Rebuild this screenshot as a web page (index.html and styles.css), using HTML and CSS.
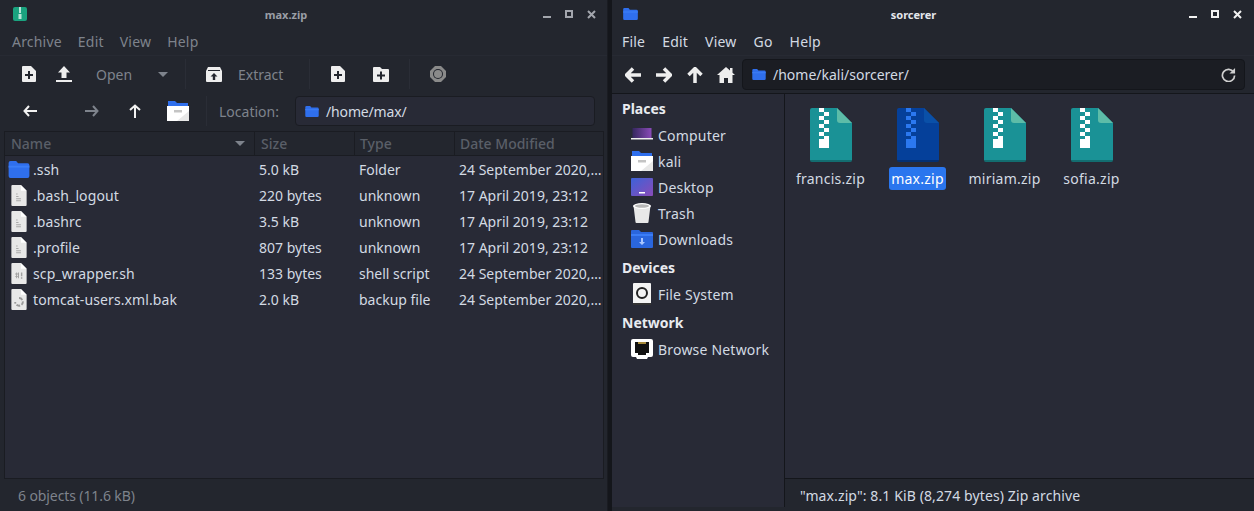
FILE: index.html
```html
<!DOCTYPE html>
<html lang="en">
<head>
  <meta charset="UTF-8" />
  <title>max.zip and sorcerer</title>
  <link rel="stylesheet" href="styles.css">
</head>
<body>
  <svg class="defs" width="0" height="0">
    <symbol id="folder" viewBox="0 0 22 18"><path d="M0 2a2 2 0 0 1 2-2h6l2 2.500h10a2 2 0 0 1 2 2V16a2 2 0 0 1-2 2H2a2 2 0 0 1-2-2z" fill="#2f6fed"/><path d="M0 5h22v2H0z" fill="#3b7df5"/></symbol>
    <symbol id="homefolder" viewBox="0 0 22 20"><path d="M1 0h7l2 2h11v5H1z" fill="#2f6fed"/><path d="M0 5h22v15H0z" fill="#fff"/><path d="M7 9h8v2.500H7z" fill="#c4c4c4"/><path d="M10 20l12-10v10z" fill="#e8e8e8"/></symbol>
    <symbol id="textfile" viewBox="0 0 16 22"><path d="M1 0h9l6 6v15a1 1 0 0 1-1 1H1a1 1 0 0 1-1-1V1a1 1 0 0 1 1-1z" fill="#e8e8e8"/><path d="M10 0l6 6h-6z" fill="#fff"/><path d="M5 9h1.500v1H5zM5 11.500h2.500v1H5zM5 14h5v1H5zM5 16h5v1H5z" fill="#a8a8a8"/></symbol>
    <symbol id="scriptfile" viewBox="0 0 16 22"><path d="M1 0h9l6 6v15a1 1 0 0 1-1 1H1a1 1 0 0 1-1-1V1a1 1 0 0 1 1-1z" fill="#e8e8e8"/><path d="M10 0l6 6h-6z" fill="#fff"/><path d="M4 11h4v1H4zM4 13.500h4v1H4zM5 10h1v6H5zM7 10h1v6H7zM10 10h1.500v4H10zM10 15h1.500v1.500H10z" fill="#a0a0a0"/></symbol>
    <symbol id="backupfile" viewBox="0 0 16 22"><path d="M1 0h9l6 6v15a1 1 0 0 1-1 1H1a1 1 0 0 1-1-1V1a1 1 0 0 1 1-1z" fill="#e8e8e8"/><path d="M10 0l6 6h-6z" fill="#fff"/><path d="M8 9.500a4 4 0 1 1-4 4" fill="none" stroke="#9a9a9a" stroke-width="2" stroke-dasharray="4 1.500"/></symbol>
    <symbol id="zip" viewBox="0 0 42 54"><path d="M2 0h25l15 15v37a2 2 0 0 1-2 2H2a2 2 0 0 1-2-2V2a2 2 0 0 1 2-2z" fill="currentColor"/><path d="M27 0l15 15H30a3 3 0 0 1-3-3z" fill="var(--fold)"/><path d="M9 0h5v4H9zM14 4h5v4h-5zM9 8h5v4H9zM14 12h5v4h-5zM9 16h5v4H9zM14 20h5v4h-5zM9 24h5v4H9zM14 28h5v3h-5zM9 31h10v9H9z" fill="var(--teeth)"/><path d="M0 52h42a2 2 0 0 1-2 2H2a2 2 0 0 1-2-2z" fill="#000" opacity=".25"/></symbol>
    <symbol id="newfile" viewBox="0 0 14 16"><path d="M1 0h8l5 5v10a1 1 0 0 1-1 1H1a1 1 0 0 1-1-1V1a1 1 0 0 1 1-1z" fill="#eee"/><path d="M6 5h2v3h3v2H8v3H6v-3H3V8h3z" fill="#23262e"/></symbol>
    <symbol id="newfolder" viewBox="0 0 16 15"><path d="M1 0h6l2 2h6a1 1 0 0 1 1 1v11a1 1 0 0 1-1 1H1a1 1 0 0 1-1-1V1a1 1 0 0 1 1-1z" fill="#eee"/><path d="M7 4.500h2v3h3v2H9v3H7v-3H4v-2h3z" fill="#23262e"/></symbol>
  </svg>

  <div class="window window-left">
    <div class="titlebar">
      <svg class="app-icon" viewBox="0 0 14 14"><rect width="14" height="14" rx="2" fill="#1aa37f"/><path d="M6 0h2v6H6zM5.500 7h3v5h-3z" fill="#b9e6da"/></svg>
      <div class="title title-dim">max.zip</div>
      <div class="winbtns">
        <i class="btn-min"></i><i class="btn-max"></i>
        <svg class="btn-close" viewBox="0 0 9 9"><path d="M1 1l7 7M8 1L1 8" stroke="currentColor" stroke-width="2"/></svg>
      </div>
    </div>
    <div class="menubar dim"><span>Archive</span><span>Edit</span><span>View</span><span>Help</span></div>

    <div class="toolbar">
      <div class="tool-group group-open">
        <svg class="tool-newfile"><use href="#newfile"/></svg>
        <svg class="tool-upload" viewBox="0 0 16 16"><path d="M8 0l6 6.500h-3.500V12h-5V6.500H2z M0 14h16v2H0z" fill="#eee"/></svg>
        <span class="tool-label">Open</span>
        <i class="caret"></i>
      </div>
      <div class="tool-group group-extract">
        <svg class="tool-extract" viewBox="0 0 16 15"><path d="M2 0h12l2 4v10a1 1 0 0 1-1 1H1a1 1 0 0 1-1-1V4z" fill="#eee"/><path d="M2 3h12v1H2z" fill="#23262e"/><path d="M8 6l3.500 3.500H9.200V13H6.800V9.500H4.500z" fill="#23262e"/></svg>
        <span class="tool-label">Extract</span>
      </div>
      <div class="tool-group group-add">
        <svg class="tool-newfile"><use href="#newfile"/></svg>
        <svg class="tool-newfolder"><use href="#newfolder"/></svg>
      </div>
      <div class="tool-group group-stop">
        <svg class="tool-stop" viewBox="0 0 16 16"><path d="M5 0h6l5 5v6l-5 5H5l-5-5V5z" fill="#8a8a8a"/><circle cx="8" cy="8" r="5" fill="#23262e"/><circle cx="8" cy="8" r="4" fill="#8a8a8a"/></svg>
      </div>
    </div>

    <div class="locationbar">
      <div class="nav-group">
        <svg class="nav-arrow arrow-back" viewBox="0 0 14 12"><path d="M6 1L1.500 6 6 11M2 6h12" fill="none" stroke="currentColor" stroke-width="2"/></svg>
        <svg class="nav-arrow arrow-fwd dim-icon" viewBox="0 0 14 12"><path d="M8 1l4.500 5L8 11M12 6H0" fill="none" stroke="currentColor" stroke-width="2"/></svg>
        <svg class="nav-arrow arrow-up" viewBox="0 0 12 14"><path d="M1 6l5-4.500L11 6M6 2v12" fill="none" stroke="currentColor" stroke-width="2"/></svg>
        <svg class="nav-home"><use href="#homefolder"/></svg>
      </div>
      <span class="location-label">Location:</span>
      <div class="location-entry">
        <svg class="path-folder"><use href="#folder"/></svg>
        <span>/home/max/</span>
      </div>
    </div>

    <div class="listview">
      <div class="list-header">
        <div class="col col-name">Name<i class="caret"></i></div>
        <div class="col col-size">Size</div>
        <div class="col col-type">Type</div>
        <div class="col col-date">Date Modified</div>
      </div>
      <div class="row">
        <div class="col col-name"><svg class="row-folder"><use href="#folder"/></svg>.ssh</div>
        <div class="col col-size">5.0 kB</div><div class="col col-type">Folder</div><div class="col col-date">24 September 2020,…</div>
      </div>
      <div class="row">
        <div class="col col-name"><svg class="row-file"><use href="#textfile"/></svg>.bash_logout</div>
        <div class="col col-size">220 bytes</div><div class="col col-type">unknown</div><div class="col col-date">17 April 2019, 23:12</div>
      </div>
      <div class="row">
        <div class="col col-name"><svg class="row-file"><use href="#textfile"/></svg>.bashrc</div>
        <div class="col col-size">3.5 kB</div><div class="col col-type">unknown</div><div class="col col-date">17 April 2019, 23:12</div>
      </div>
      <div class="row">
        <div class="col col-name"><svg class="row-file"><use href="#textfile"/></svg>.profile</div>
        <div class="col col-size">807 bytes</div><div class="col col-type">unknown</div><div class="col col-date">17 April 2019, 23:12</div>
      </div>
      <div class="row">
        <div class="col col-name"><svg class="row-file"><use href="#scriptfile"/></svg>scp_wrapper.sh</div>
        <div class="col col-size">133 bytes</div><div class="col col-type">shell script</div><div class="col col-date">24 September 2020,…</div>
      </div>
      <div class="row">
        <div class="col col-name"><svg class="row-file"><use href="#backupfile"/></svg>tomcat-users.xml.bak</div>
        <div class="col col-size">2.0 kB</div><div class="col col-type">backup file</div><div class="col col-date">24 September 2020,…</div>
      </div>
    </div>
    <div class="statusbar dim">6 objects (11.6 kB)</div>
  </div>

  <div class="window window-right">
    <div class="titlebar">
      <svg class="app-icon folder-icon"><use href="#folder"/></svg>
      <div class="title">sorcerer</div>
      <div class="winbtns bright">
        <i class="btn-min"></i><i class="btn-max"></i>
        <svg class="btn-close" viewBox="0 0 9 9"><path d="M1 1l7 7M8 1L1 8" stroke="currentColor" stroke-width="2"/></svg>
      </div>
    </div>
    <div class="menubar"><span>File</span><span>Edit</span><span>View</span><span>Go</span><span>Help</span></div>

    <div class="pathbar">
      <div class="path-nav">
        <svg class="big-arrow" viewBox="0 0 16 16"><path d="M8 1.500L1.500 8 8 14.500M2.500 8H16" fill="none" stroke="currentColor" stroke-width="3.500"/></svg>
        <svg class="big-arrow" viewBox="0 0 16 16"><path d="M8 1.500L14.500 8 8 14.500M13.500 8H0" fill="none" stroke="currentColor" stroke-width="3.500"/></svg>
        <svg class="big-arrow" viewBox="0 0 16 16"><path d="M1.500 8L8 1.500 14.500 8M8 2.500V16" fill="none" stroke="currentColor" stroke-width="3.500"/></svg>
        <svg class="big-home" viewBox="0 0 18 16"><path d="M9 0l4 3.500V1h2.500v4.700L18 8h-2.500v8H11v-5H7v5H2.500V8H0z" fill="currentColor"/></svg>
      </div>
      <div class="path-entry">
        <svg class="path-folder"><use href="#folder"/></svg>
        <span>/home/kali/sorcerer/</span>
        <svg class="reload" viewBox="0 0 16 16"><path d="M13.500 5.500A6.500 6.500 0 1 0 14.500 9" fill="none" stroke="currentColor" stroke-width="1.800"/><path d="M15 1v6H9z" fill="currentColor"/></svg>
      </div>
    </div>

    <div class="panes">
      <div class="sidebar">
        <h3 class="side-first">Places</h3>
        <div class="side-item">
          <svg class="side-icon" viewBox="0 0 22 20"><defs><linearGradient id="grad" x1="0" y1="0" x2="1" y2="1"><stop offset="0" stop-color="#3c62d8"/><stop offset="1" stop-color="#8a4bb8"/></linearGradient><linearGradient id="screen" x1="0" y1="0" x2="1" y2="0"><stop offset="0" stop-color="#35275e"/><stop offset="1" stop-color="#8a4bb8"/></linearGradient></defs><path d="M1.500 3h19v10h-19z" fill="url(#screen)"/><path d="M0 13h22v1.500H0z" fill="#eee"/></svg>Computer
        </div>
        <div class="side-item"><svg class="side-icon"><use href="#homefolder"/></svg>kali</div>
        <div class="side-item">
          <svg class="side-icon" viewBox="0 0 22 18"><rect width="22" height="18" rx="1" fill="url(#grad)"/><path d="M8 14h6v1.500H8z" fill="#fff"/></svg>Desktop
        </div>
        <div class="side-item">
          <svg class="side-icon" viewBox="0 0 22 20"><path d="M2.500 2.500h17l-2 16.500a1 1 0 0 1-1 1H5.500a1 1 0 0 1-1-1z" fill="#e8e8e8"/><ellipse cx="11" cy="3" rx="9" ry="3" fill="#fff"/><ellipse cx="11" cy="3" rx="7" ry="1.800" fill="#b8b8b8"/></svg>Trash
        </div>
        <div class="side-item">
          <svg class="side-icon" viewBox="0 0 22 18"><path d="M1 0h7l2 2h11a1 1 0 0 1 1 1v14a1 1 0 0 1-1 1H1a1 1 0 0 1-1-1V1a1 1 0 0 1 1-1z" fill="#2a66dd"/><path d="M0 4h22v2H0z" fill="#3b7df5"/><path d="M10 8h2v4h2l-3 3-3-3h2z" fill="#a9c6ff"/></svg>Downloads
        </div>
        <h3 class="side-gap">Devices</h3>
        <div class="side-item">
          <svg class="side-icon icon-tall" viewBox="0 0 22 22"><path d="M3 0h16a1 1 0 0 1 1 1v19H2V1a1 1 0 0 1 1-1z" fill="#f4f4f4"/><path d="M2 20h18v2H2z" fill="#333"/><circle cx="11" cy="10" r="5" fill="none" stroke="#222" stroke-width="2"/></svg>File System
        </div>
        <h3 class="side-gap">Network</h3>
        <div class="side-item">
          <svg class="side-icon" viewBox="0 0 22 20"><path d="M2 0h18a2 2 0 0 1 2 2v14a2 2 0 0 1-2 2h-3l-1 2H6l-1-2H2a2 2 0 0 1-2-2V2a2 2 0 0 1 2-2z" fill="#fff"/><path d="M4 3h14v11h-3v2H7v-2H4z" fill="#111"/><path d="M7 3h8v2H7z" fill="#a88a3a"/></svg>Browse Network
        </div>
      </div>

      <div class="file-pane">
        <div class="icon-grid">
          <div class="file-item">
            <svg class="zip-icon zip-teal"><use href="#zip"/></svg>
            <span class="file-name">francis.zip</span>
          </div>
          <div class="file-item">
            <svg class="zip-icon zip-selected"><use href="#zip"/></svg>
            <span class="file-name selected">max.zip</span>
          </div>
          <div class="file-item">
            <svg class="zip-icon zip-teal"><use href="#zip"/></svg>
            <span class="file-name">miriam.zip</span>
          </div>
          <div class="file-item">
            <svg class="zip-icon zip-teal"><use href="#zip"/></svg>
            <span class="file-name">sofia.zip</span>
          </div>
        </div>
        <div class="file-status">"max.zip": 8.1 KiB (8,274 bytes) Zip archive</div>
      </div>
    </div>
  </div>
</body>
</html>
```

FILE: styles.css
```css
* {
  box-sizing: border-box;
}

html, body {
  margin: 0;
  height: 100%;
}

body {
  width: 1254px;
  height: 511px;
  overflow: hidden;
  display: flex;
  gap: 4px;
  background: #14161b;
  font-family: "Noto Sans", sans-serif;
  font-size: 14px;
  color: #d3dae3;
}

.defs {
  position: absolute;
}

svg {
  display: block;
  flex: none;
}

.window {
  height: 511px;
  display: flex;
  flex-direction: column;
  background: #23262e;
}

.window-left {
  width: 608px;
  border-right: 1px solid #1a1c22;
}

.window-right {
  width: 642px;
  flex: 1;
}

/* title bar */
.titlebar {
  height: 28px;
  flex: none;
  display: flex;
  align-items: center;
  padding: 0 0 0 13px;
  position: relative;
}

.window-right .titlebar {
  padding-left: 11px;
}

.app-icon {
  width: 14px;
  height: 14px;
}

.folder-icon {
  width: 15px;
  height: 12px;
}

.title {
  flex: 1;
  text-align: center;
  font-size: 11px;
  font-weight: 700;
  color: #e4e7ec;
}

.title-dim {
  color: #9a9ea6;
  padding-left: 2px;
}

.winbtns {
  display: flex;
  align-items: center;
  gap: 14px;
  padding-right: 11px;
  color: #a3a6ad;
}

.winbtns.bright {
  padding-right: 12px;
  color: #f2f2f2;
}

.btn-min {
  width: 8px;
  height: 2px;
  margin-top: 6px;
  background: currentColor;
}

.btn-max {
  width: 8px;
  height: 8px;
  border: 2px solid currentColor;
}

.btn-close {
  width: 9px;
  height: 9px;
}

/* menus */
.menubar {
  height: 28px;
  flex: none;
  display: flex;
  align-items: center;
  gap: 17px;
  padding-left: 12px;
  border-bottom: 1px solid #272a33;
  color: #d3dae3;
  letter-spacing: 0.2px;
}

.window-right .menubar {
  padding-left: 10px;
}

.menubar.dim {
  gap: 16px;
  color: #7e838c;
}

/* left toolbar */
.toolbar {
  height: 36px;
  flex: none;
  display: flex;
  align-items: center;
  color: #7e838c;
}

.tool-group {
  display: flex;
  align-items: center;
  height: 30px;
  border-right: 1px solid #2a2d36;
}

.group-open {
  width: 186px;
  padding-left: 22px;
}

.group-extract {
  width: 124px;
  padding-left: 20px;
}

.group-add {
  width: 100px;
  padding-left: 21px;
  gap: 28px;
}

.group-stop {
  padding-left: 20px;
  border-right: 0;
}

.tool-newfile {
  width: 14px;
  height: 16px;
}

.tool-newfolder {
  width: 16px;
  height: 15px;
}

.tool-upload {
  width: 16px;
  height: 16px;
  margin-left: 20px;
}

.tool-extract {
  width: 16px;
  height: 15px;
}

.tool-stop {
  width: 16px;
  height: 16px;
}

.tool-label {
  margin-left: 16px;
}

.group-open .tool-label {
  margin-left: 24px;
}

.group-open .caret {
  margin-left: 26px;
}

.caret {
  width: 0;
  height: 0;
  border-left: 5px solid transparent;
  border-right: 5px solid transparent;
  border-top: 5px solid #7e838c;
}

/* left location row */
.locationbar {
  height: 38px;
  flex: none;
  display: flex;
  align-items: center;
  color: #7e838c;
}

.nav-group {
  width: 207px;
  height: 30px;
  display: flex;
  align-items: center;
  padding-left: 23px;
  border-right: 1px solid #2a2d36;
}

.nav-arrow {
  color: #f2f2f2;
  width: 14px;
  height: 12px;
}

.arrow-fwd {
  color: #7e838c;
  margin-left: 48px;
}

.arrow-up {
  width: 12px;
  height: 14px;
  margin-left: 30px;
}

.nav-home {
  width: 22px;
  height: 20px;
  margin-left: 26px;
}

.location-label {
  margin-left: 12px;
  width: 76px;
}

.location-entry {
  width: 300px;
  height: 30px;
  display: flex;
  align-items: center;
  gap: 7px;
  padding-left: 9px;
  background: #282a36;
  border: 1px solid #1a1c22;
  border-radius: 4px;
  color: #d3dae3;
  letter-spacing: -0.15px;
}

.path-folder {
  width: 14px;
  height: 11px;
}

/* archive list */
.listview {
  flex: 1;
  margin: 1px 0 0 4px;
  width: 600px;
  background: #282a36;
  border: 1px solid #1a1c22;
  border-top: 0;
}

.list-header {
  height: 25px;
  display: flex;
  align-items: center;
  background: #23262e;
  border-top: 1px solid #1a1c22;
  border-bottom: 1px solid #1a1c22;
  color: #5a5f68;
  font-weight: 500;
}

.list-header .col {
  height: 100%;
  border-right: 1px solid #1a1c22;
}

.list-header .col-date {
  border-right: 0;
}

.row {
  height: 26px;
  display: flex;
  align-items: center;
}

.col {
  display: flex;
  align-items: center;
  flex: none;
  white-space: nowrap;
  padding-left: 6px;
}

.col-name {
  width: 250px;
  padding-left: 6px;
}

.list-header .caret {
  margin-left: auto;
  margin-right: 9px;
}

.col-size {
  width: 100px;
}

.row .col-size {
  padding-left: 4px;
}

.col-type {
  width: 100px;
  padding-left: 5px;
}

.row .col-type {
  padding-left: 4px;
}

.col-date {
  width: 148px;
  padding-left: 5px;
  overflow: hidden;
}

.row .col-date {
  padding-left: 4px;
}

.row .col-name {
  padding-left: 3px;
  letter-spacing: 0.1px;
}

.row-folder {
  width: 22px;
  height: 17px;
  margin-right: 3px;
}

.row-file {
  width: 16px;
  height: 21px;
  margin: 0 6px 0 3px;
}

.statusbar {
  height: 32px;
  flex: none;
  display: flex;
  align-items: center;
  padding-left: 18px;
  color: #7e838c;
  letter-spacing: -0.1px;
}

/* right window path row */
.pathbar {
  height: 37px;
  flex: none;
  display: flex;
  align-items: center;
}

.path-nav {
  width: 130px;
  display: flex;
  align-items: center;
  gap: 15px;
  padding-left: 13px;
  color: #eee;
}

.big-arrow {
  width: 16px;
  height: 16px;
}

.big-home {
  width: 18px;
  height: 16px;
  margin-left: -1px;
}

.path-entry {
  width: 503px;
  height: 31px;
  display: flex;
  align-items: center;
  gap: 7px;
  padding-left: 9px;
  background: #1b1d23;
  border: 1px solid #14161b;
  border-radius: 4px;
}

.reload {
  width: 15px;
  height: 15px;
  margin-left: auto;
  margin-right: 8px;
  color: #cfcfcf;
}

.panes {
  flex: 1;
  display: flex;
  border-top: 1px solid #14161b;
  min-height: 0;
}

/* places */
.sidebar {
  width: 173px;
  flex: none;
  background: #282a36;
  border-right: 1px solid #14161b;
  padding: 1px 0 0 10px;
  margin-bottom: 4px;
}

.sidebar h3 {
  margin: 0;
  height: 26px;
  display: flex;
  align-items: center;
  font-size: 14px;
  font-weight: 700;
  color: #e8ebf0;
}

.sidebar .side-first {
  height: 27px;
}

.sidebar .side-gap {
  height: 28px;
  margin-top: 1px;
}

.side-item {
  height: 26px;
  display: flex;
  align-items: center;
  padding-left: 9px;
  gap: 5px;
  letter-spacing: 0.2px;
}

.side-icon {
  width: 22px;
  height: 20px;
}

.side-icon.icon-tall {
  height: 22px;
}

/* icon view */
.file-pane {
  flex: 1;
  display: flex;
  flex-direction: column;
}

.icon-grid {
  flex: 1;
  display: flex;
  background: #282a36;
  padding: 14px 0 0 2px;
  border-bottom: 1px solid #14161b;
  margin-bottom: 1px;
}

.file-item {
  width: 87px;
  display: flex;
  flex-direction: column;
  align-items: center;
  gap: 5px;
}

.zip-icon {
  width: 42px;
  height: 54px;
}

.zip-teal {
  color: #1a9296;
  --fold: #5dbca8;
  --teeth: #fff;
}

.zip-selected {
  color: #05409a;
  --fold: #0a50a8;
  --teeth: #2b78f0;
}

.file-name {
  padding: 0 3px;
  line-height: 23px;
  border-radius: 3px;
  letter-spacing: 0.25px;
}

.file-name.selected {
  padding: 0 2px;
  background: #2a76ee;
  color: #fff;
}

.file-status {
  height: 31px;
  flex: none;
  display: flex;
  align-items: center;
  padding-left: 15px;
  background: #23262e;
  letter-spacing: 0.11px;
}
```
